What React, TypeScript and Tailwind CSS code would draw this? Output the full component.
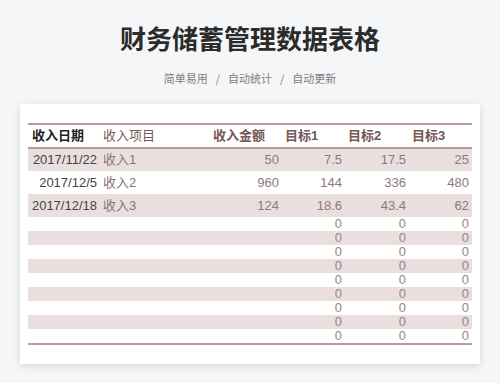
const rows = [
  { date: "2017/11/22", item: "收入1", amount: "50", t1: "7.5", t2: "17.5", t3: "25" },
  { date: "2017/12/5", item: "收入2", amount: "960", t1: "144", t2: "336", t3: "480" },
  { date: "2017/12/18", item: "收入3", amount: "124", t1: "18.6", t2: "43.4", t3: "62" },
];

const emptyRows = Array.from({ length: 9 }, (_, i) => i);

export default function App() {
  return (
    <div
      className="min-h-[383px] bg-[#f5f6f7] pt-[18px] pb-[20px]"
      style={{ fontFamily: '"Liberation Sans", "Noto Sans CJK SC", sans-serif' }}
    >
      <h1
        className="text-center text-[26px] leading-[39px] font-bold text-[#2b2b2b]"
        style={{ fontFamily: '"Noto Sans CJK SC", sans-serif' }}
      >
        财务储蓄管理数据表格
      </h1>
      <p
        className="mt-[11px] text-center text-[11px] leading-[20px] text-[#808080]"
        style={{ fontFamily: '"Noto Sans CJK SC", sans-serif' }}
      >
        简单易用<span className="mx-[8px]">/</span>自动统计<span className="mx-[8px]">/</span>自动更新
      </p>

      <div className="mx-5 mt-[16px] bg-white px-2 pt-[19px] pb-[19px] shadow-[0_2px_8px_rgba(0,0,0,0.13)]">
        <table className="w-full table-fixed border-collapse text-[13px]">
          <colgroup>
            <col className="w-[72px]" />
            <col className="w-[110px]" />
            <col className="w-[72px]" />
            <col className="w-[63px]" />
            <col className="w-[64px]" />
            <col className="w-[63px]" />
          </colgroup>
          <thead>
            <tr className="h-[24px] border-y-2 border-[#b89c9c] text-left">
              <th className="pl-[4px] font-bold text-[#1f1f1f]">收入日期</th>
              <th className="pl-[3px] font-normal text-[#7a5858]">收入项目</th>
              <th className="pl-[3px] font-bold text-[#765656]">收入金额</th>
              <th className="pl-[3px] font-bold text-[#765656]">目标1</th>
              <th className="pl-[3px] font-bold text-[#765656]">目标2</th>
              <th className="pl-[3px] font-bold text-[#765656]">目标3</th>
            </tr>
          </thead>
          <tbody>
            {rows.map((r, i) => (
              <tr key={r.date} className={`h-[23px] ${i % 2 === 0 ? "bg-[#eadfdf]" : "bg-white"}`}>
                <td className="pr-[3px] text-right text-[#444]">{r.date}</td>
                <td className="pl-[3px] text-[#8a7474]">{r.item}</td>
                <td className="pr-[3px] text-right text-[#8a7a7a]">{r.amount}</td>
                <td className="pr-[3px] text-right text-[#8a7a7a]">{r.t1}</td>
                <td className="pr-[3px] text-right text-[#8a7a7a]">{r.t2}</td>
                <td className="pr-[3px] text-right text-[#8a7a7a]">{r.t3}</td>
              </tr>
            ))}
            {emptyRows.map((i) => (
              <tr
                key={i}
                className={`h-[14px] leading-[14px] ${i % 2 === 1 ? "bg-[#eadfdf]" : "bg-white"} ${
                  i === 8 ? "border-b-2 border-[#b89c9c]" : ""
                }`}
              >
                <td />
                <td />
                <td />
                <td className="pr-[3px] text-right text-[#9a8484]">0</td>
                <td className="pr-[3px] text-right text-[#9a8484]">0</td>
                <td className="pr-[3px] text-right text-[#9a8484]">0</td>
              </tr>
            ))}
          </tbody>
        </table>
      </div>
    </div>
  );
}
